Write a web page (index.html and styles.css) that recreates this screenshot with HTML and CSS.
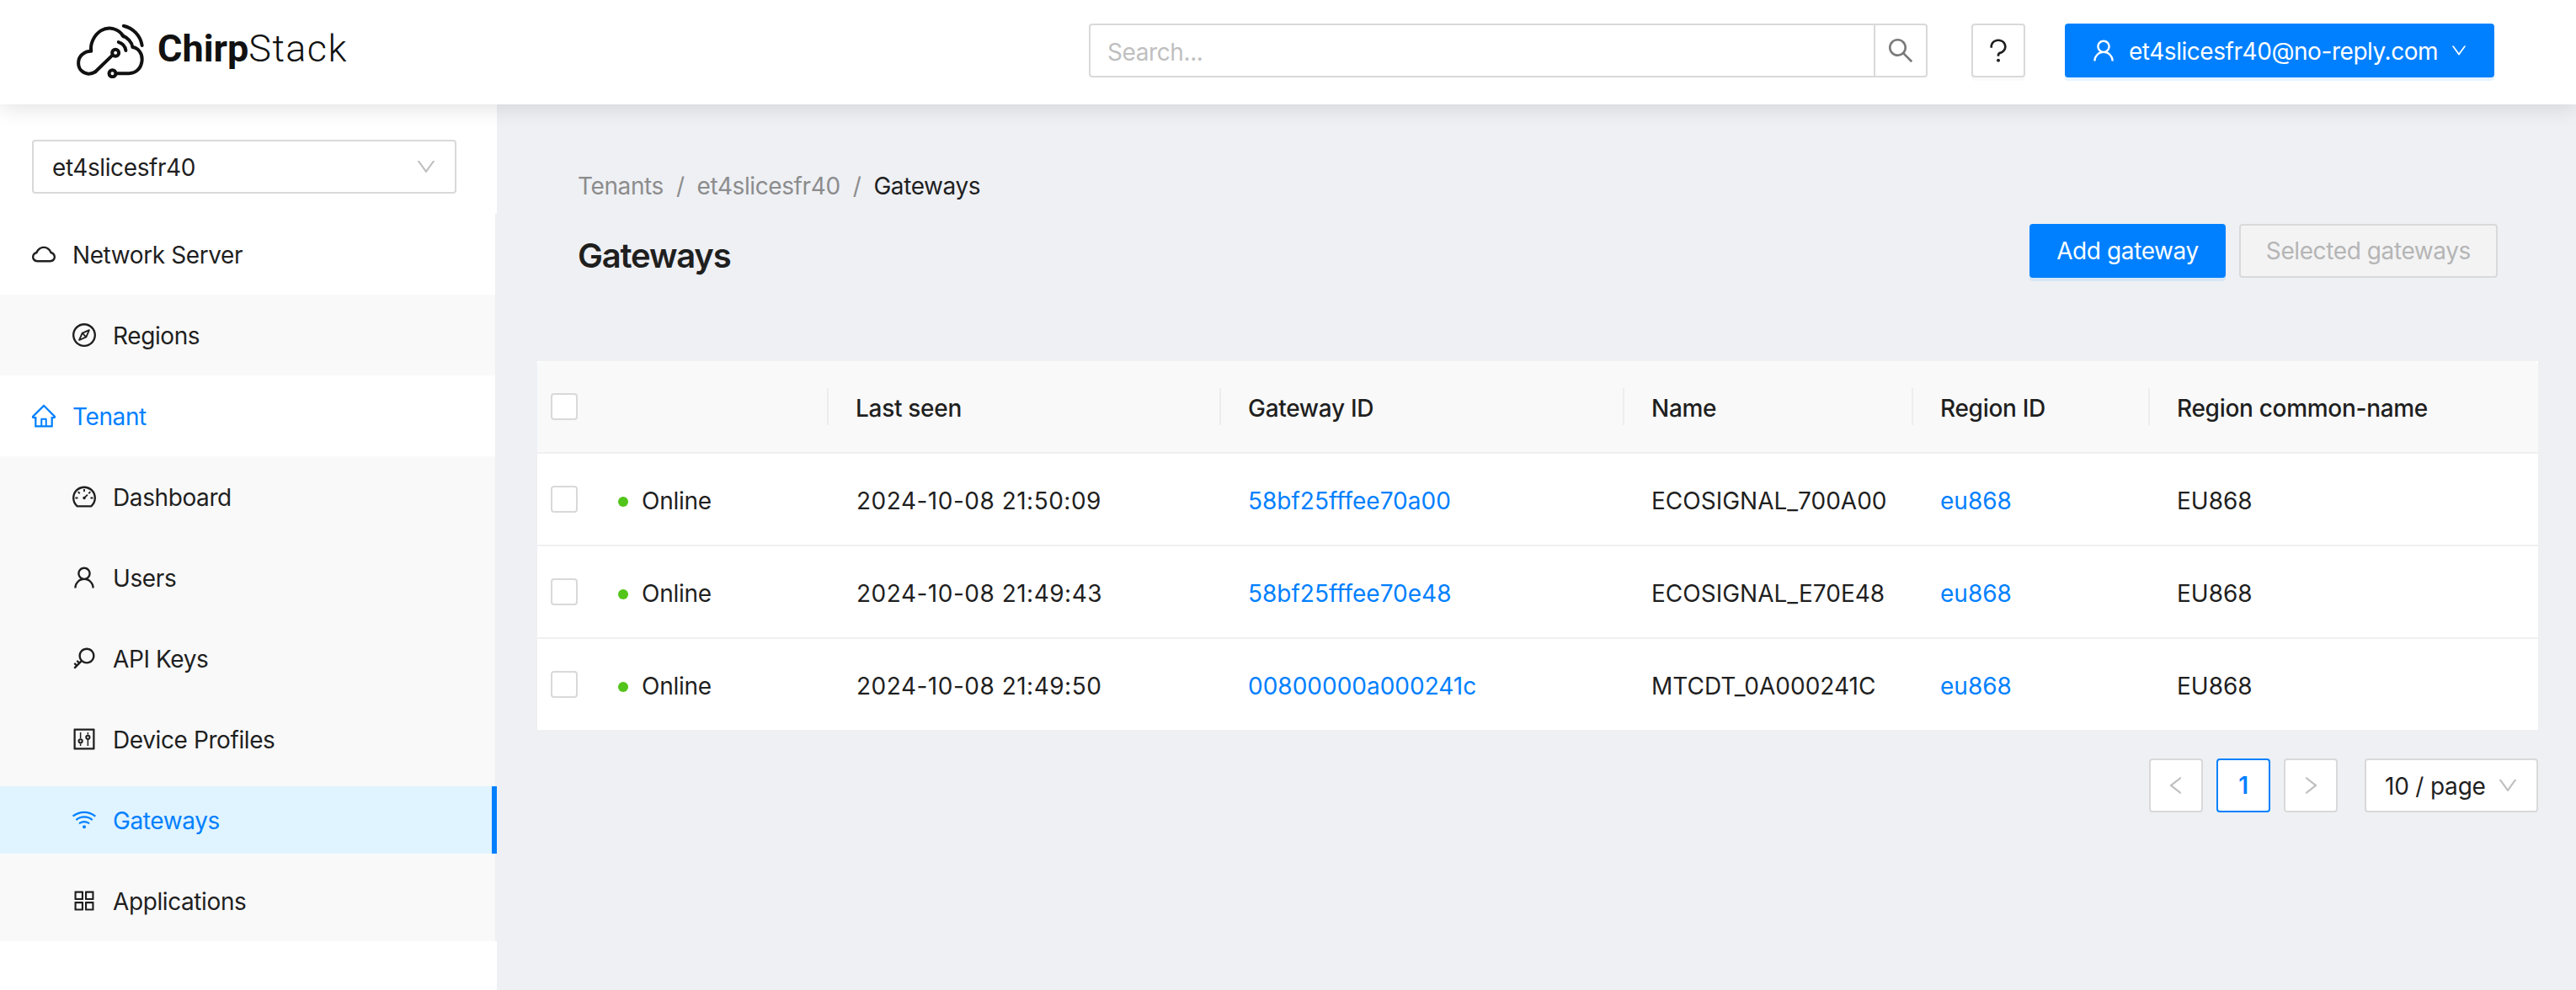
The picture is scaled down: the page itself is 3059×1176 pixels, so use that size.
FILE: index.html
```html
<!DOCTYPE html>
<html lang="en">
<head>
<meta charset="utf-8">
<title>Gateways - ChirpStack</title>
<link rel="stylesheet" href="styles.css">
</head>
<body>
<svg class="defs" xmlns="http://www.w3.org/2000/svg">
<symbol id="i-down" viewBox="0 0 1024 1024"><path d="M884 256h-75c-5.1 0-9.9 2.5-12.9 6.6L512 654.2 227.9 262.6c-3-4.1-7.8-6.6-12.9-6.6h-75c-6.5 0-10.3 7.4-6.5 12.7l352.6 486.1c12.8 17.6 39 17.6 51.7 0l352.6-486.1c3.9-5.3.1-12.7-6.4-12.7z"/></symbol>
<symbol id="i-search" viewBox="0 0 1024 1024"><path d="M909.6 854.5L649.9 594.8C690.2 542.7 712 479 712 412c0-80.2-31.3-155.4-87.9-212.1-56.6-56.7-132-87.9-212.1-87.9s-155.5 31.3-212.1 87.9C143.2 256.5 112 331.8 112 412c0 80.1 31.3 155.5 87.9 212.1C256.5 680.8 331.8 712 412 712c67 0 130.6-21.8 182.7-62l259.7 259.6a8.2 8.2 0 0011.6 0l43.6-43.5a8.2 8.2 0 000-11.6zM570.4 570.4C528 612.7 471.8 636 412 636s-116-23.3-158.4-65.6C211.3 528 188 471.8 188 412s23.3-116.1 65.6-158.4C296 211.3 352.2 188 412 188s116.1 23.2 158.4 65.6S636 352.2 636 412s-23.3 116.1-65.6 158.4z"/></symbol>
<symbol id="i-user" viewBox="0 0 1024 1024"><path d="M858.5 763.6a374 374 0 00-80.6-119.5 375.63 375.63 0 00-119.5-80.6c-.4-.2-.8-.3-1.2-.5C719.5 518 760 444.7 760 362c0-137-111-248-248-248S264 225 264 362c0 82.7 40.5 156 102.8 201.1-.4.2-.8.3-1.2.5-44.8 18.9-85 46-119.5 80.6a375.63 375.63 0 00-80.6 119.5A371.7 371.7 0 00136 901.8a8 8 0 008 8.2h60c4.4 0 7.9-3.5 8-7.8 2-77.2 33-149.5 87.8-204.3 56.7-56.7 132-87.9 212.2-87.9s155.5 31.2 212.2 87.9C779 752.7 810 825 812 902.2c.1 4.4 3.6 7.8 8 7.8h60a8 8 0 008-8.2c-1-47.8-10.9-94.3-29.5-138.2zM512 534c-45.9 0-89.1-17.9-121.6-50.4S340 407.9 340 362c0-45.9 17.9-89.1 50.4-121.6S466.1 190 512 190s89.1 17.9 121.6 50.4S684 316.1 684 362c0 45.9-17.9 89.1-50.4 121.6S557.9 534 512 534z"/></symbol>
<symbol id="i-cloud" viewBox="0 0 1024 1024"><path d="M811.4 418.7C765.6 297.9 648.9 212 512.2 212S258.8 297.8 213 418.6C127.3 441.1 64 519.1 64 612c0 110.5 89.5 200 199.9 200h496.2C870.5 812 960 722.5 960 612c0-92.7-63.1-170.7-148.6-193.3zm36.3 281a123.07 123.07 0 01-87.6 36.3H263.9c-33.1 0-64.2-12.9-87.6-36.3A123.3 123.3 0 01140 612c0-28 9.1-54.3 26.2-76.3a125.7 125.7 0 0166.1-43.7l37.9-9.9 13.9-36.6c8.6-22.8 20.6-44.1 35.7-63.4a245.6 245.6 0 0152.4-49.9c41.1-28.9 89.5-44.2 140-44.2s98.9 15.3 140 44.2c19.9 14 37.5 30.8 52.4 49.9 15.1 19.3 27.1 40.7 35.7 63.4l13.8 36.5 37.8 10c54.3 14.5 92.1 63.8 92.1 120 0 33.1-12.9 64.3-36.3 87.7z"/></symbol>
<symbol id="i-home" viewBox="0 0 1024 1024"><path d="M946.5 505L560.1 118.8l-25.9-25.9a31.5 31.5 0 00-44.4 0L77.5 505a63.9 63.9 0 00-18.8 46c.4 35.2 29.7 63.3 64.9 63.3h42.5V940h691.8V614.3h43.4c17.1 0 33.2-6.7 45.3-18.8a63.6 63.6 0 0018.7-45.3c0-17-6.7-33.1-18.8-45.2zM568 868H456V664h112v204zm217.9-325.7V868H632V640c0-22.1-17.9-40-40-40H432c-22.1 0-40 17.9-40 40v228H238.1V542.3h-96l370-369.7 23.1 23.1L882 542.3h-96.1z"/></symbol>
<symbol id="i-compass" viewBox="0 0 1024 1024"><path d="M512 64C264.6 64 64 264.6 64 512s200.6 448 448 448 448-200.6 448-448S759.4 64 512 64zm0 820c-205.4 0-372-166.6-372-372s166.6-372 372-372 372 166.6 372 372-166.6 372-372 372zm198.4-588.1a32 32 0 00-24.5.5L414.9 415 296.4 686c-3.6 8.2-3.6 17.5 0 25.7 3.4 7.8 9.7 13.9 17.7 17 3.8 1.5 7.7 2.2 11.7 2.2 4.4 0 8.7-.9 12.8-2.7l271-118.6 118.5-271a32.06 32.06 0 00-17.7-42.7zM576.8 534.4l26.2 26.2-42.4 42.4-26.2-26.2L380 644.4 447.5 490 422 464.4l42.4-42.4 25.5 25.5L644.4 380l-67.6 154.4zM464.4 422L422 464.4l25.5 25.6 86.9 86.8 26.2 26.2 42.4-42.4-26.2-26.2-86.8-86.9z"/></symbol>
<symbol id="i-dash" viewBox="0 0 1024 1024"><path d="M924.8 385.6a446.7 446.7 0 00-96-142.4 446.7 446.7 0 00-142.4-96C631.1 123.8 572.5 112 512 112s-119.1 11.8-174.4 35.2a446.7 446.7 0 00-142.4 96 446.7 446.7 0 00-96 142.4C75.8 440.9 64 499.5 64 560c0 132.7 58.3 257.7 159.9 343.1l1.7 1.4c5.8 4.8 13.1 7.5 20.6 7.5h531.7c7.5 0 14.8-2.7 20.6-7.5l1.7-1.4C901.7 817.7 960 692.7 960 560c0-60.5-11.9-119.1-35.2-174.4zM761.4 836H262.6A371.12 371.12 0 01140 560c0-99.4 38.7-192.8 109-263 70.3-70.3 163.7-109 263-109 99.4 0 192.8 38.7 263 109 70.3 70.3 109 163.7 109 263 0 105.6-44.5 205.5-122.6 276zM623.5 421.5a8.03 8.03 0 00-11.3 0L527.7 506c-18.7-5-39.4-.2-54.1 14.5a55.95 55.95 0 000 79.2 55.95 55.95 0 0079.2 0 55.87 55.87 0 0014.5-54.1l84.5-84.5c3.1-3.1 3.1-8.2 0-11.3l-28.3-28.3zM490 320h44c4.4 0 8-3.6 8-8v-80c0-4.4-3.6-8-8-8h-44c-4.4 0-8 3.6-8 8v80c0 4.4 3.6 8 8 8zm260 218v44c0 4.4 3.6 8 8 8h80c4.4 0 8-3.6 8-8v-44c0-4.4-3.6-8-8-8h-80c-4.4 0-8 3.6-8 8zm12.7-197.2l-31.1-31.1a8.03 8.03 0 00-11.3 0l-56.6 56.6a8.03 8.03 0 000 11.3l31.1 31.1c3.1 3.1 8.2 3.1 11.3 0l56.6-56.6c3.1-3.1 3.1-8.2 0-11.3zm-458.6-31.1a8.03 8.03 0 00-11.3 0l-31.1 31.1a8.03 8.03 0 000 11.3l56.6 56.6c3.1 3.1 8.2 3.1 11.3 0l31.1-31.1c3.1-3.1 3.1-8.2 0-11.3l-56.6-56.6zM262 530h-80c-4.4 0-8 3.6-8 8v44c0 4.4 3.6 8 8 8h80c4.4 0 8-3.6 8-8v-44c0-4.4-3.6-8-8-8z"/></symbol>
<symbol id="i-key" viewBox="0 0 1024 1024"><path d="M608 112c-167.9 0-304 136.1-304 304 0 70.3 23.9 135 63.9 186.5l-41.1 41.1-62.3-62.3a8.15 8.15 0 00-11.4 0l-39.8 39.8a8.15 8.15 0 000 11.4l62.3 62.3-44.9 44.9-62.3-62.3a8.15 8.15 0 00-11.4 0l-39.8 39.8a8.15 8.15 0 000 11.4l62.3 62.3-65.3 65.3a8.03 8.03 0 000 11.3l42.3 42.3c3.1 3.1 8.2 3.1 11.3 0l253.6-253.6A304.06 304.06 0 00608 720c167.9 0 304-136.1 304-304S775.9 112 608 112zm161.2 465.2C726.2 620.3 668.9 644 608 644c-60.9 0-118.2-23.7-161.2-66.8-43.1-43-66.8-100.3-66.8-161.2 0-60.9 23.7-118.2 66.8-161.2 43-43.1 100.3-66.8 161.2-66.8 60.9 0 118.2 23.7 161.2 66.8 43.1 43 66.8 100.3 66.8 161.2 0 60.9-23.7 118.2-66.8 161.2z"/></symbol>
<symbol id="i-control" viewBox="0 0 1024 1024"><path d="M880 112H144c-17.7 0-32 14.3-32 32v736c0 17.7 14.3 32 32 32h736c17.7 0 32-14.3 32-32V144c0-17.7-14.3-32-32-32zm-40 728H184V184h656v656z"/><path d="M348 256h48v224h-48zM348 688h48v80h-48zM628 256h48v80h-48zM628 544h48v224h-48z"/><circle cx="372" cy="584" r="68" fill="none" stroke="currentColor" stroke-width="64"/><circle cx="652" cy="440" r="68" fill="none" stroke="currentColor" stroke-width="64"/></symbol>
<symbol id="i-wifi" viewBox="0 0 1024 1024"><path d="M723 620.5C666.8 571.6 593.4 542 513 542s-153.8 29.6-210.1 78.6a8.1 8.1 0 00-.8 11.2l36 42.9c2.9 3.4 8 3.8 11.4.9C393.1 637.2 450.3 614 513 614s119.9 23.2 163.5 61.5c3.4 2.9 8.5 2.5 11.4-.9l36-42.9c2.8-3.3 2.4-8.3-.9-11.2zm117.4-140.1C751.7 406.5 637.6 362 513 362s-238.7 44.5-327.5 118.4a8.05 8.05 0 00-1 11.3l36 42.9c2.8 3.4 7.9 3.8 11.2 1C308 472.2 406.1 434 513 434s205 38.2 281.2 101.6c3.4 2.8 8.4 2.4 11.2-1l36-42.9c2.8-3.4 2.4-8.5-1-11.3zm116.7-139C835.7 241.8 680.3 182 511 182c-168.2 0-322.6 59-443.7 157.4a8 8 0 00-1.1 11.4l36 42.9c2.8 3.3 7.8 3.8 11.1 1.1C222 306.7 360.3 254 511 254c151.8 0 291 53.5 400 142.7 3.4 2.8 8.4 2.3 11.2-1.1l36-42.9c2.9-3.4 2.4-8.5-1.1-11.3zM448 778a64 64 0 10128 0 64 64 0 10-128 0z"/></symbol>
<symbol id="i-apps" viewBox="0 0 1024 1024"><path d="M464 144H160c-8.8 0-16 7.2-16 16v304c0 8.8 7.2 16 16 16h304c8.8 0 16-7.2 16-16V160c0-8.8-7.2-16-16-16zm-52 268H212V212h200v200zm452-268H560c-8.8 0-16 7.2-16 16v304c0 8.8 7.2 16 16 16h304c8.8 0 16-7.2 16-16V160c0-8.8-7.2-16-16-16zm-52 268H612V212h200v200zM464 544H160c-8.8 0-16 7.2-16 16v304c0 8.8 7.2 16 16 16h304c8.8 0 16-7.2 16-16V560c0-8.8-7.2-16-16-16zm-52 268H212V612h200v200zm452-268H560c-8.8 0-16 7.2-16 16v304c0 8.8 7.2 16 16 16h304c8.8 0 16-7.2 16-16V560c0-8.8-7.2-16-16-16zm-52 268H612V612h200v200z"/></symbol>
<symbol id="i-question" viewBox="0 0 1024 1024"><path d="M764 280.9c-14-30.6-33.9-58.1-59.3-81.6C653.1 151.4 584.6 125 512 125s-141.1 26.4-192.7 74.2c-25.4 23.6-45.3 51-59.3 81.7-14.6 32-22 65.9-22 100.9v27c0 6.2 5 11.2 11.2 11.2h54c6.2 0 11.2-5 11.2-11.2v-27c0-99.5 88.6-180.4 197.6-180.4s197.6 80.9 197.6 180.4c0 40.8-14.5 79.2-42 111.2-27.2 31.7-65.6 54.4-108.1 64-24.3 5.5-46.2 19.2-61.7 38.8a110.85 110.85 0 00-23.9 68.6v31.4c0 6.2 5 11.2 11.2 11.2h54c6.2 0 11.2-5 11.2-11.2v-31.4c0-15.7 10.9-29.5 26-32.9 58.4-13.2 111.4-44.7 149.3-88.7 19.1-22.3 34-47.1 44.3-74 10.7-27.9 16.1-57.2 16.1-87 0-35-7.4-69-22-100.9zM512 787c-30.9 0-56 25.1-56 56s25.1 56 56 56 56-25.1 56-56-25.1-56-56-56z"/></symbol>
<symbol id="i-left" viewBox="0 0 1024 1024"><path d="M724 218.3V141c0-6.7-7.7-10.4-12.9-6.3L260.3 486.8a31.86 31.86 0 000 50.3l450.8 352.1c5.3 4.1 12.9.4 12.9-6.3v-77.3c0-4.9-2.3-9.6-6.1-12.6l-360-281 360-281.1c3.8-3 6.1-7.7 6.1-12.6z"/></symbol>
<symbol id="i-right" viewBox="0 0 1024 1024"><path d="M765.7 486.8L314.9 134.7A7.97 7.97 0 00302 141v77.3c0 4.9 2.3 9.6 6.1 12.6l360 281.1-360 281.1c-3.9 3-6.1 7.7-6.1 12.6V883c0 6.7 7.7 10.4 12.9 6.3l450.8-352.1a31.96 31.96 0 000-50.4z"/></symbol>
</svg>

<header class="topbar">
  <div class="logo">
    <svg class="logo-mark" viewBox="95 50 250 195" stroke="#111" stroke-width="12" stroke-linecap="round" stroke-linejoin="round">
      <path d="M165 222 C150 232 130 232 117 220 C100 205 100 175 118 160 C127 152 138 148 150 148 C146 125 158 92 185 75 C212 58 248 66 266 96"/>
      <path d="M262 92 C280 100 296 116 298 134 C318 136 334 158 332 180 C330 208 312 228 285 228 H238"/>
      <path d="M165 222 L226 163"/>
      <circle cx="237" cy="154" r="12"/>
      <circle cx="226" cy="228" r="12"/>
      <path d="M248 116 C262 120 272 132 274 146"/>
      <path d="M266 58 C300 66 326 92 332 128"/>
    </svg>
    <span class="logo-text"><b>Chirp</b><span>Stack</span></span>
  </div>
  <div class="search">
    <span class="search-input">Search...</span>
    <span class="search-btn"><svg class="ic-search"><use href="#i-search"/></svg></span>
  </div>
  <span class="help"><svg class="ic-help"><use href="#i-question"/></svg></span>
  <span class="user-btn">
    <svg class="ic"><use href="#i-user"/></svg>
    <span class="user-name">et4slicesfr40@no-reply.com</span>
    <svg class="ic-small"><use href="#i-down"/></svg>
  </span>
</header>

<div class="layout">
  <aside class="sidebar">
    <div class="select tenant-select"><span>et4slicesfr40</span><svg class="ic-arrow"><use href="#i-down"/></svg></div>
    <nav class="menu">
      <div class="item"><svg class="ic"><use href="#i-cloud"/></svg><span>Network Server</span></div>
      <div class="sub">
        <div class="item sub-item"><svg class="ic"><use href="#i-compass"/></svg><span>Regions</span></div>
      </div>
      <div class="item is-open"><svg class="ic"><use href="#i-home"/></svg><span>Tenant</span></div>
      <div class="sub">
        <div class="item sub-item"><svg class="ic"><use href="#i-dash"/></svg><span>Dashboard</span></div>
        <div class="item sub-item"><svg class="ic"><use href="#i-user"/></svg><span>Users</span></div>
        <div class="item sub-item"><svg class="ic"><use href="#i-key"/></svg><span>API Keys</span></div>
        <div class="item sub-item"><svg class="ic"><use href="#i-control"/></svg><span>Device Profiles</span></div>
        <div class="item sub-item is-active"><svg class="ic"><use href="#i-wifi"/></svg><span>Gateways</span></div>
        <div class="item sub-item"><svg class="ic"><use href="#i-apps"/></svg><span>Applications</span></div>
      </div>
    </nav>
  </aside>

  <main class="content">
    <section class="page-head">
      <div class="crumbs"><span>Tenants</span><i>/</i><span>et4slicesfr40</span><i>/</i><span class="crumb-now">Gateways</span></div>
      <div class="title-row">
        <h1>Gateways</h1>
        <div class="actions">
          <span class="btn btn-primary">Add gateway</span>
          <span class="btn btn-disabled">Selected gateways</span>
        </div>
      </div>
    </section>

    <table class="grid">
      <colgroup><col class="c1"><col class="c2"><col class="c3"><col class="c4"><col class="c5"><col class="c6"><col></colgroup>
      <thead>
        <tr>
          <th><span class="check"></span></th><th class="sep"></th><th class="sep">Last seen</th><th class="sep">Gateway ID</th><th class="sep">Name</th><th class="sep">Region ID</th><th>Region common-name</th>
        </tr>
      </thead>
      <tbody>
        <tr>
          <td><span class="check"></span></td><td class="status"><span class="dot"></span>Online</td><td class="date">2024-10-08 21:50:09</td><td><a>58bf25fffee70a00</a></td><td>ECOSIGNAL_700A00</td><td><a>eu868</a></td><td>EU868</td>
        </tr>
        <tr>
          <td><span class="check"></span></td><td class="status"><span class="dot"></span>Online</td><td class="date">2024-10-08 21:49:43</td><td><a>58bf25fffee70e48</a></td><td>ECOSIGNAL_E70E48</td><td><a>eu868</a></td><td>EU868</td>
        </tr>
        <tr>
          <td><span class="check"></span></td><td class="status"><span class="dot"></span>Online</td><td class="date">2024-10-08 21:49:50</td><td><a>00800000a000241c</a></td><td>MTCDT_0A000241C</td><td><a>eu868</a></td><td>EU868</td>
        </tr>
      </tbody>
    </table>

    <div class="pager">
      <span class="page"><svg class="ic-page"><use href="#i-left"/></svg></span>
      <span class="page page-now">1</span>
      <span class="page"><svg class="ic-page"><use href="#i-right"/></svg></span>
      <div class="select size-select"><span>10 / page</span><svg class="ic-arrow"><use href="#i-down"/></svg></div>
    </div>
  </main>
</div>
</body>
</html>
```
FILE: styles.css
```css
* { box-sizing: border-box; }
html, body { height: 100%; }
body {
  margin: 0;
  overflow: hidden;
  background: #eef0f4;
  color: #1f1f1f;
  font: 28px/44px Inter, "Liberation Sans", sans-serif;
  letter-spacing: -.4px;
}
.defs { display: none; }
svg { fill: currentColor; flex: none; display: block; }
.ic { width: 32px; height: 32px; }
.ic-small { width: 22px; height: 22px; }
.ic-arrow { width: 28px; height: 28px; color: #bfbfbf; }
.ic-search { width: 36px; height: 36px; color: #7a7a7a; }
.ic-help { width: 36px; height: 36px; }
.ic-page { width: 28px; height: 28px; color: #bfbfbf; }

.topbar {
  position: relative;
  z-index: 2;
  height: 124px;
  padding: 28px 97px 0 0;
  display: flex;
  align-items: flex-start;
  background: #fff;
  box-shadow: 0 4px 24px rgba(0, 0, 0, .12);
}
.logo { width: 1293px; height: 64px; padding-left: 90px; display: flex; align-items: flex-start; }
.logo-mark { width: 83px; height: 65px; fill: none; }
.logo-text { margin: 2px 0 0 14px; font: 300 45px/56px Roboto, sans-serif; letter-spacing: 0; color: #111; }
.logo-text b { font-weight: 700; }
.logo-text span { letter-spacing: 1.4px; }
.search {
  width: 996px;
  height: 64px;
  display: flex;
  border: 2px solid #d9d9d9;
  border-radius: 4px;
  background: #fff;
}
.search-input { flex: 1; padding: 10px 20px 0; color: #bfbfbf; }
.search-btn { width: 62px; border-left: 2px solid #d9d9d9; display: flex; align-items: center; justify-content: center; }
.help {
  width: 64px;
  height: 64px;
  margin-left: 52px;
  display: flex;
  align-items: center;
  justify-content: center;
  border: 2px solid #d9d9d9;
  border-radius: 4px;
  box-shadow: 0 4px 0 rgba(0, 0, 0, .02);
}
.user-btn {
  width: 510px;
  height: 64px;
  margin-left: 47px;
  padding: 0 31px 0 30px;
  display: flex;
  align-items: center;
  justify-content: space-between;
  color: #fff;
  background: #0080ff;
  border-radius: 4px;
  box-shadow: 0 4px 0 rgba(5, 145, 255, .1);
}
.user-name { flex: 1; margin-left: 14px; letter-spacing: -.45px; padding-top: 2px; }

.layout { display: flex; height: calc(100% - 124px); }
.sidebar { width: 590px; flex: none; background: #fff; padding-top: 42px; }
.select {
  height: 64px;
  display: flex;
  align-items: center;
  justify-content: space-between;
  background: #fff;
  border: 2px solid #d9d9d9;
  border-radius: 4px;
}
.select span { padding-top: 2px; }
.tenant-select { width: 504px; margin: 0 0 24px 38px; padding: 0 20px 0 22px; }
.menu { display: flex; flex-direction: column; border-right: 2px solid #eff0f3; }
.item {
  position: relative;
  flex: none;
  height: 80px;
  padding-left: 36px;
  display: flex;
  align-items: center;
  gap: 18px;
}
.item span { padding-top: 2px; }
.menu > .item { margin: 8px 0; }
.sub { display: flex; flex-direction: column; gap: 16px; padding: 8px 0; background: #f9f9f9; }
.sub-item { padding-left: 84px; }
.is-open { color: #0080ff; }
.is-active { color: #0080ff; background: #e0f4ff; }
.is-active::after {
  content: "";
  position: absolute;
  top: 0;
  bottom: 0;
  right: -2px;
  width: 6px;
  background: #0080ff;
}

.content { flex: 1; padding: 0 45px 0 48px; }
.page-head { padding: 75px 48px 0; height: 305px; }
.crumbs { display: flex; color: #8c8c8c; }
.crumbs i { font-style: normal; margin: 0 15px; }
.crumb-now { color: #1f1f1f; }
.title-row { display: flex; justify-content: space-between; margin-top: 23px; }
h1 { margin: 0; font-size: 40px; line-height: 76px; font-weight: 600; letter-spacing: -1.2px; }
.actions { display: flex; gap: 16px; }
.btn {
  height: 64px;
  padding: 0 32px;
  display: flex;
  align-items: center;
  border-radius: 4px;
}
.btn-primary { color: #fff; background: #0080ff; box-shadow: 0 4px 0 rgba(5, 145, 255, .1); }
.btn-disabled { color: #b5b5b5; background: #f3f3f4; border: 2px solid #d9d9d9; padding: 0 30px; }

.grid { width: 100%; border-collapse: separate; border-spacing: 0; table-layout: fixed; background: #fff; }
.c1 { width: 64px; } .c2 { width: 282px; } .c3 { width: 466px; } .c4 { width: 479px; } .c5 { width: 343px; } .c6 { width: 281px; }
th, td { height: 110px; padding: 4px 0 0 32px; text-align: left; border-bottom: 2px solid #f0f0f0; font-weight: 400; letter-spacing: 0; }
th { background: #f9f9f9; font-weight: 500; position: relative; letter-spacing: -.3px; }
th:first-child, td:first-child { padding: 0 0 0 16px; }
th:first-child { border-top-left-radius: 6px; }
th:last-child { border-top-right-radius: 6px; }
.date { letter-spacing: .5px; padding-left: 33px; }
.status { letter-spacing: -.25px; }
.sep::after {
  content: "";
  position: absolute;
  top: 32px;
  bottom: 32px;
  right: 0;
  width: 2px;
  background: #ededed;
}
a { color: #0080ff; }
.check { display: block; width: 32px; height: 32px; background: #fff; border: 2px solid #d9d9d9; border-radius: 4px; }
.dot { display: inline-block; width: 12px; height: 12px; margin-right: 16px; border-radius: 50%; background: #52c41a; vertical-align: 3px; }

.pager { margin-top: 32px; display: flex; justify-content: flex-end; gap: 16px; }
.page {
  width: 64px;
  height: 64px;
  display: flex;
  align-items: center;
  justify-content: center;
  background: #fff;
  border: 2px solid #d9d9d9;
  border-radius: 4px;
}
.page-now { color: #0080ff; border-color: #0080ff; font-weight: 600; }
.size-select { width: 206px; margin-left: 16px; padding: 0 20px 0 22px; letter-spacing: -.2px; }
```
